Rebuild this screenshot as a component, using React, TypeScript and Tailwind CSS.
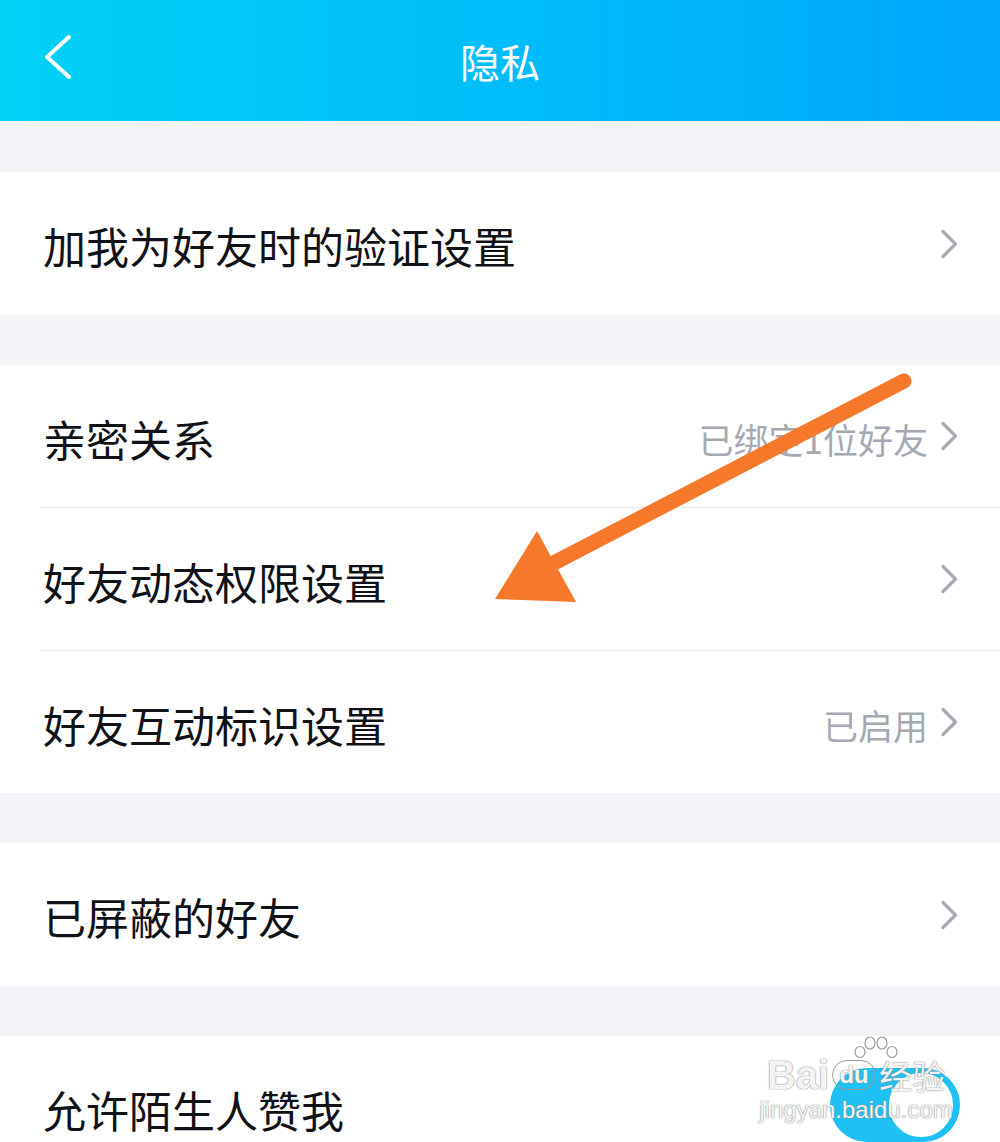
const cjk = "font-['Noto_Sans_CJK_SC','Noto_Sans',sans-serif]";

function Chevron() {
  return (
    <svg className="h-[30px] w-[18px] shrink-0" viewBox="0 0 18 30" fill="none">
      <path d="M3 2.5 L15.5 15 L3 27.5" stroke="#a6aab3" strokeWidth="3.2" strokeLinecap="round" strokeLinejoin="round" />
    </svg>
  );
}

function Row({ label, value, tall }: { label: string; value?: string; tall?: boolean }) {
  return (
    <div className={`flex items-center justify-between bg-white pl-[43px] pr-[42px] ${tall ? "h-[143px]" : "h-[142px]"}`}>
      <span className="pt-1 text-[43px] leading-none text-[#111217]">{label}</span>
      <div className="flex items-center gap-[12px]">
        {value ? <span className="pt-1 text-[35px] leading-none text-[#a5a9b2]">{value}</span> : null}
        <Chevron />
      </div>
    </div>
  );
}

function Divider() {
  return (
    <div className="bg-white pl-[40px]">
      <div className="h-px bg-[#e9eaed]" />
    </div>
  );
}

function Gap({ h }: { h: string }) {
  return <div className={`${h} bg-[#f3f4f8]`} />;
}

export default function App() {
  return (
    <div className={`relative h-[1142px] w-[1000px] overflow-hidden bg-[#f3f4f8] ${cjk}`}>
      <header className="relative flex h-[121px] items-center justify-center bg-gradient-to-r from-[#00d2f6] to-[#00a7fb]">
        <svg className="absolute left-[42px] top-[34px] h-[46px] w-[32px]" viewBox="0 0 32 46" fill="none">
          <path d="M27 3 L5 23 L27 43" stroke="white" strokeWidth="4" strokeLinecap="round" strokeLinejoin="round" />
        </svg>
        <h1 className="text-[40px] font-normal leading-none text-white">隐私</h1>
      </header>

      <Gap h="h-[51px]" />
      <Row label="加我为好友时的验证设置" tall />
      <Gap h="h-[50px]" />
      <Row label="亲密关系" value="已绑定1位好友" />
      <Divider />
      <Row label="好友动态权限设置" />
      <Divider />
      <Row label="好友互动标识设置" value="已启用" />
      <Gap h="h-[50px]" />
      <Row label="已屏蔽的好友" tall />
      <Gap h="h-[50px]" />

      <div className="flex h-[110px] items-start justify-between bg-white pl-[43px] pr-[40px] pt-[52px]">
        <span className="text-[43px] leading-none text-[#111217]">允许陌生人赞我</span>
        <div className="relative mt-[-20px] h-[74px] w-[130px] rounded-full bg-[#1fc1f4]">
          <div className="absolute right-[2px] top-0 h-[74px] w-[74px] rounded-full border-[5px] border-[#1fc1f4] bg-white" />
        </div>
      </div>

      {/* annotation arrow */}
      <svg className="pointer-events-none absolute left-0 top-0 h-[1142px] w-[1000px]" viewBox="0 0 1000 1142">
        <line x1="904" y1="381" x2="548" y2="566" stroke="#f6782b" strokeWidth="15" strokeLinecap="round" />
        <polygon points="495,599 537,531 576,602" fill="#f6782b" />
      </svg>

      {/* watermark */}
      <div className="pointer-events-none absolute left-[764px] top-[1036px] flex w-[184px] flex-col items-center font-['Liberation_Sans',sans-serif] text-white/90 [text-shadow:0_0_1.5px_#8a8a8a,0_0_1px_#8a8a8a]">
        <svg className="ml-[38px] h-[22px] w-[46px]" viewBox="0 0 46 22" fill="white" stroke="#9a9a9a" strokeWidth="1.2">
          <ellipse cx="8" cy="16" rx="5" ry="5.5" />
          <ellipse cx="18" cy="7" rx="5" ry="6" />
          <ellipse cx="30" cy="7" rx="5" ry="6" />
          <ellipse cx="40" cy="16" rx="5" ry="5.5" />
        </svg>
        <div className="flex h-[34px] items-center">
          <span className="text-[40px] font-bold leading-none">Bai</span>
          <span className="mx-[3px] flex h-[30px] w-[44px] items-center justify-center rounded-full border border-[#9a9a9a] text-[24px] font-bold leading-none">du</span>
          <span className={`text-[33px] leading-none ${cjk}`}>经验</span>
        </div>
        <span className="mt-[6px] text-[24px] leading-none">jingyan.baidu.com</span>
      </div>
    </div>
  );
}
